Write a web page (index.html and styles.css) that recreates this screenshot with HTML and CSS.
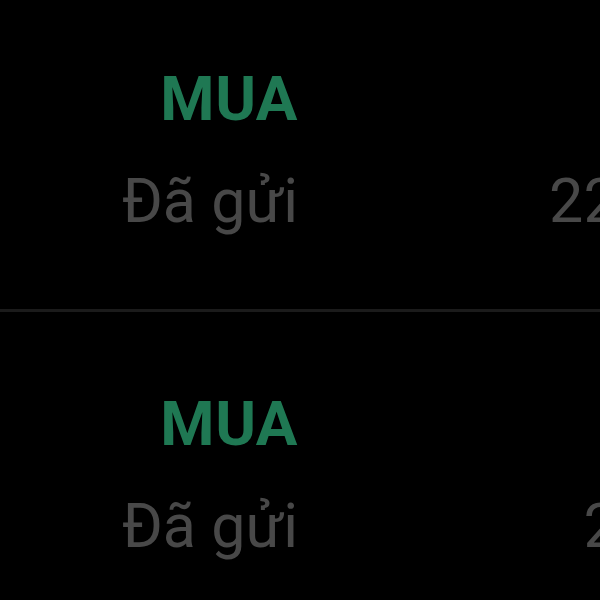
FILE: index.html
```html
<!DOCTYPE html>
<html lang="vi">
<head>
  <meta charset="UTF-8">
  <title>Lệnh</title>
  <meta name="viewport" content="width=device-width, initial-scale=1.0">
  <link rel="stylesheet" href="styles.css">
</head>
<body>
  <div class="order-list">
    <div class="order-row">
      <div class="side buy">MUA</div>
      <div class="gap"></div>
      <div class="status">Đã gửi</div>
      <div class="time">22:15</div>
    </div>
    <div class="order-row">
      <div class="side buy">MUA</div>
      <div class="gap"></div>
      <div class="status">Đã gửi</div>
      <div class="time">2:15</div>
    </div>
  </div>
</body>
</html>
```

FILE: styles.css
```css
* {
  box-sizing: border-box;
  margin: 0;
  padding: 0;
}
html, body {
  width: 600px;
  height: 600px;
  overflow: hidden;
  background-color: #000;
}
body {
  font-family: Roboto, "Noto Sans", sans-serif;
}

.order-list {
  margin-top: -13px;
  width: 760px;
}

.order-row {
  display: grid;
  grid-template-columns: 298px 243px 160px;
  grid-template-rows: 70px 32px 70px;
  padding: 77px 0 73px;
  border-bottom: 3px solid #1b1b1b;
}

.side {
  grid-column: 1;
  grid-row: 1;
  text-align: right;
  font-size: 62px;
  line-height: 70px;
  font-weight: 700;
  letter-spacing: 0.5px;
}
.buy {
  color: #1f7853;
}

.status {
  grid-column: 1;
  grid-row: 3;
  text-align: right;
  font-size: 61px;
  line-height: 70px;
  color: #484848;
  white-space: nowrap;
}

.time {
  grid-column: 3;
  grid-row: 3;
  text-align: right;
  font-size: 61px;
  line-height: 70px;
  color: #484848;
  white-space: nowrap;
}
```
